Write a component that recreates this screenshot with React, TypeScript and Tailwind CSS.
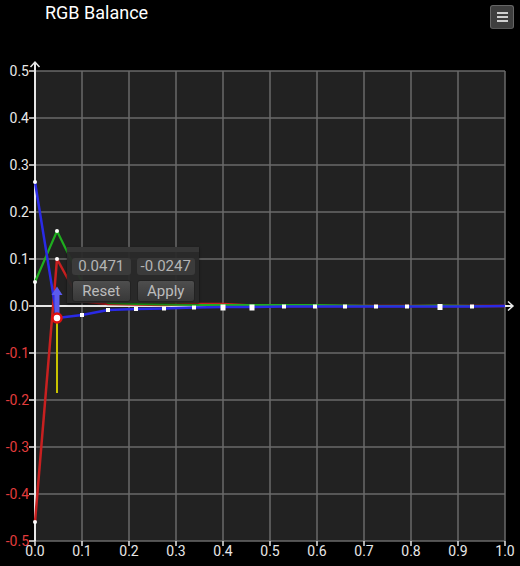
import React from 'react'

type Pt = [number, number]

// plot area in page pixels
const X0 = 35
const X1 = 505
const Y0 = 71
const Y1 = 541
const STEP = 47

const xs = Array.from({ length: 11 }, (_, i) => X0 + i * STEP)
const ys = Array.from({ length: 11 }, (_, i) => Y0 + i * STEP)

const tail: Pt[] = [315, 345, 376, 407, 440, 472, 505].map((x) => [x, 306])

const red: Pt[] = [
  [35, 522], [57, 259], [80, 301], [108, 304], [136, 304.5], [164, 305],
  [194, 304], [223, 304], [252, 305.5], [284, 306], ...tail,
]
const green: Pt[] = [
  [35, 282], [57, 231], [82, 282], [108, 303], [136, 304], [164, 304.5],
  [194, 305], [223, 305], [252, 305], [284, 305], [315, 305], [345, 305.5],
  [376, 306], [407, 306], [440, 305.5], [472, 306], [505, 306],
]
const blue: Pt[] = [
  [35, 182], [57, 318], [82, 315], [108, 310], [136, 309], [164, 308.5],
  [194, 307.5], [223, 307], [252, 307], [284, 306.5], [315, 306.5],
  [345, 306.5], [376, 306.5], [407, 306.5], [440, 306.5], [472, 306.5], [505, 306],
]

const line = (pts: Pt[]) => pts.map((p) => p.join(',')).join(' ')

function Chart() {
  return (
    <svg width={520} height={532} viewBox="0 34 520 532" className="block">
      <rect x={X0} y={Y0} width={X1 - X0} height={Y1 - Y0} fill="#222222" />

      {/* grid */}
      {xs.slice(1).map((x) => (
        <line key={'v' + x} x1={x} y1={Y0} x2={x} y2={Y1} stroke="#6a6a6a" strokeWidth={1.5} />
      ))}
      {ys.map((y) => (
        <line key={'h' + y} x1={X0} y1={y} x2={X1} y2={y} stroke="#6a6a6a" strokeWidth={1.5} />
      ))}

      {/* ticks */}
      {ys.map((y) => (
        <line key={'ty' + y} x1={29} y1={y} x2={X0} y2={y} stroke="#e4e4e4" strokeWidth={1.5} />
      ))}
      {xs.map((x) => (
        <line key={'tx' + x} x1={x} y1={Y1} x2={x} y2={546} stroke="#e4e4e4" strokeWidth={1.5} />
      ))}

      {/* axes */}
      <line x1={X0} y1={306} x2={513} y2={306} stroke="#e8e8e8" strokeWidth={2} />
      <polyline points="508,301.5 513,306 508,310.5" fill="none" stroke="#e8e8e8" strokeWidth={1.5} />
      <line x1={X0} y1={Y1} x2={X0} y2={62} stroke="#e8e8e8" strokeWidth={2} />
      <polyline points="30.5,67 35,62 39.5,67" fill="none" stroke="#e8e8e8" strokeWidth={1.5} />

      {/* labels */}
      <g fontFamily="Roboto, 'Liberation Sans', sans-serif" fontSize={14}>
        {ys.map((y, i) => {
          const v = (0.5 - i * 0.1).toFixed(1)
          const neg = i > 5
          return (
            <text key={'ly' + y} x={29} y={y + 4.5} textAnchor="end" fill={neg ? '#e23c3c' : '#e8e8e8'}>
              {neg ? v : v.replace('-', '')}
            </text>
          )
        })}
        {xs.map((x, i) => (
          <text key={'lx' + x} x={x} y={555.5} textAnchor="middle" fill="#e8e8e8">
            {(i / 10).toFixed(1)}
          </text>
        ))}
      </g>

      {/* curves */}
      <polyline points={line(red)} fill="none" stroke="#c82020" strokeWidth={2.5} strokeLinejoin="round" />
      <polyline points={line(green)} fill="none" stroke="#1fae1f" strokeWidth={2.2} strokeLinejoin="round" />
      <polyline points={line(blue)} fill="none" stroke="#2a2ae6" strokeWidth={2.5} strokeLinejoin="round" />

      {/* selected point handles */}
      <line x1={57} y1={318} x2={57} y2={393} stroke="#c8c400" strokeWidth={2} />
      <rect x={54.5} y={294} width={5} height={24} fill="#5b5bec" />
      <polygon points="51.5,295 62.5,295 57,286.5" fill="#5b5bec" />

      {/* control points */}
      {[[35, 182], [35, 282], [57, 231], [57, 259], [35, 522]].map(([x, y]) => (
        <circle key={'c' + x + y} cx={x} cy={y} r={2} fill="#ffffff" />
      ))}
      {blue.slice(2, 16).map(([x, y]) => {
        const big = x === 223 || x === 252 || x === 440
        const s = big ? 5 : 4
        return <rect key={'d' + x} x={x - s / 2} y={y - s / 2} width={s} height={big ? 6 : 4} fill="#ffffff" />
      })}
      <circle cx={57} cy={318} r={4.5} fill="#ffffff" stroke="#e01010" strokeWidth={2.5} />
    </svg>
  )
}

function Tooltip() {
  return (
    <div className="absolute left-[67px] top-[247px] flex h-[56px] w-[132px] flex-col bg-[#2a2a2a]/95 shadow-[0_1px_2px_rgba(0,0,0,0.6)]">
      <div className="h-[5px] bg-[#363636]" />
      <div className="grid grid-cols-2 gap-x-[6px] gap-y-[5px] pl-[5px] pr-[4px] pt-[6px] text-[15px] leading-none">
        <div className="flex h-[17px] items-center justify-center rounded-[3px] bg-[#3b3b3b] text-[#b4b4b4]">0.0471</div>
        <div className="flex h-[17px] items-center justify-center rounded-[3px] bg-[#3b3b3b] text-[#b4b4b4]">-0.0247</div>
        <button className="flex h-[22px] items-center justify-center rounded-[3px] border border-[#222] bg-gradient-to-b from-[#4e4e4e] to-[#383838] text-[#bcbcbc]">
          Reset
        </button>
        <button className="flex h-[22px] items-center justify-center rounded-[3px] border border-[#222] bg-gradient-to-b from-[#4e4e4e] to-[#383838] text-[#bcbcbc]">
          Apply
        </button>
      </div>
    </div>
  )
}

export default function App() {
  return (
    <div className="relative h-[566px] w-[520px] overflow-hidden bg-black font-['Roboto','Liberation_Sans',sans-serif]">
      <header className="flex h-[34px] items-start justify-between">
        <h1 className="ml-[45px] mt-[4px] text-[18px] leading-none text-white">RGB Balance</h1>
        <button className="mr-[6px] mt-[5px] flex h-[24px] w-[24px] flex-col items-center justify-center gap-[2px] rounded-[3px] border border-[#666] border-b-[#555] bg-[#3e3e3e]">
          <span className="h-[2px] w-[11px] bg-[#cfcfcf]" />
          <span className="h-[2px] w-[11px] bg-[#cfcfcf]" />
          <span className="h-[2px] w-[11px] bg-[#cfcfcf]" />
        </button>
      </header>
      <Chart />
      <Tooltip />
    </div>
  )
}
